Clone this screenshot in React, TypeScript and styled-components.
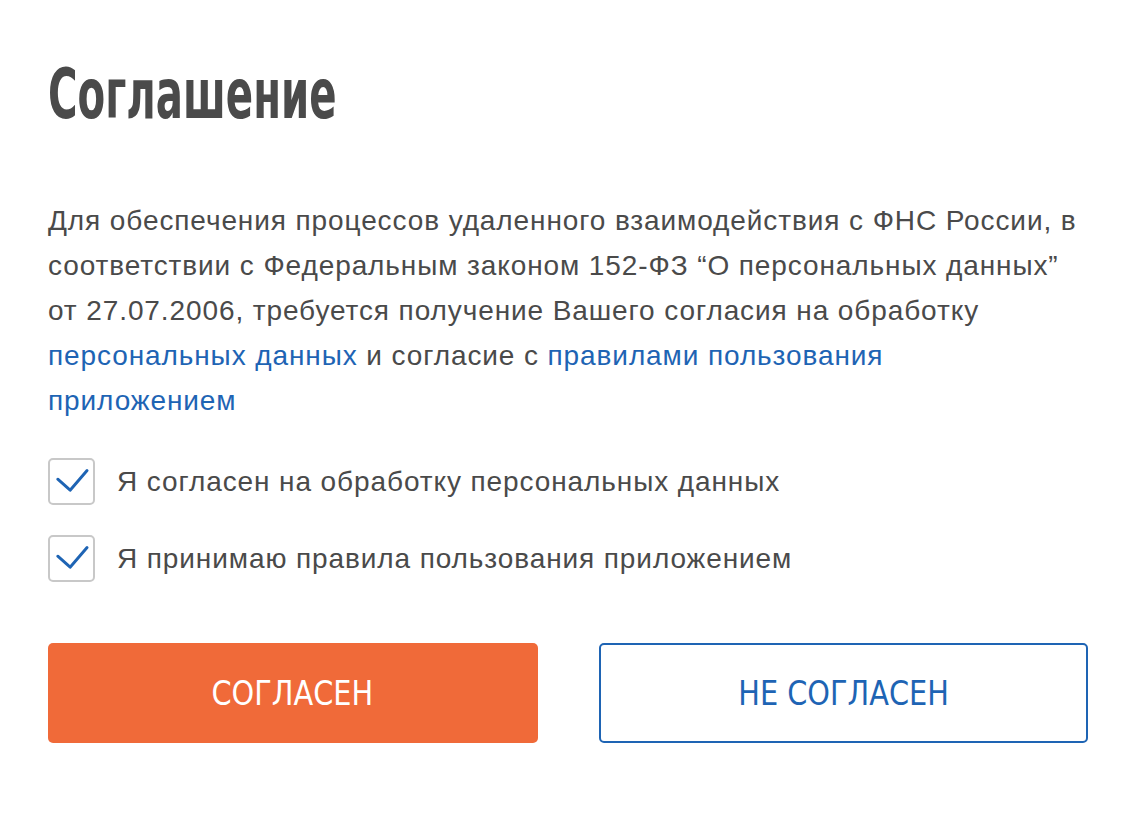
import React, { useState } from "react";
import styled, { createGlobalStyle } from "styled-components";

const GlobalStyle = createGlobalStyle`
  body {
    margin: 0;
    background: #fff;
    font-family: "Liberation Sans", Arial, sans-serif;
  }
`;

const Page = styled.div`
  padding: 59px 52px 0 48px;
  display: flex;
  flex-direction: column;
`;

const Title = styled.h1`
  margin: 0;
  font-family: "DejaVu Sans Condensed", "DejaVu Sans", sans-serif;
  font-weight: 700;
  font-size: 70px;
  line-height: 1;
  color: #4a4a4a;
  transform-origin: left center;
  transform: scaleX(0.64);
`;

const Text = styled.p`
  margin: 69px 0 0;
  max-width: 1032px;
  font-size: 28px;
  line-height: 45px;
  letter-spacing: 0.9px;
  color: #4a4a4a;
`;

const Link = styled.a`
  color: #1e64b4;
  text-decoration: none;
`;

const Options = styled.div`
  margin-top: 35px;
  display: flex;
  flex-direction: column;
  gap: 30px;
`;

const Option = styled.label`
  display: flex;
  align-items: center;
  gap: 22px;
  font-size: 28px;
  letter-spacing: 0.9px;
  color: #4a4a4a;
  cursor: pointer;
`;

const Box = styled.span`
  width: 47px;
  height: 47px;
  box-sizing: border-box;
  border: 2px solid #c8c8c8;
  border-radius: 5px;
  display: flex;
  align-items: center;
  justify-content: center;
  flex-shrink: 0;
`;

const Buttons = styled.div`
  margin-top: 61px;
  display: grid;
  grid-template-columns: 1fr 1fr;
  gap: 61px;
`;

const Button = styled.button<{ $primary?: boolean }>`
  height: 100px;
  box-sizing: border-box;
  border-radius: 5px;
  font-family: "DejaVu Sans Condensed", "DejaVu Sans", sans-serif;
  font-size: 33px;
  cursor: pointer;
  background: ${(p) => (p.$primary ? "#f06a39" : "#fff")};
  color: ${(p) => (p.$primary ? "#fff" : "#1e64b4")};
  border: ${(p) => (p.$primary ? "none" : "2px solid #1e64b4")};
`;

const ButtonLabel = styled.span`
  display: inline-block;
  transform: scaleX(0.97);
`;

function Check({ checked, label, onToggle }: { checked: boolean; label: string; onToggle: () => void }) {
  return (
    <Option onClick={onToggle}>
      <Box>
        {checked && (
          <svg width="47" height="47" viewBox="0 0 47 47">
            <path d="M8.5 21 L22 33 L40.5 11.5" fill="none" stroke="#1e64b4" strokeWidth="3.2" strokeLinecap="round" strokeLinejoin="round" />
          </svg>
        )}
      </Box>
      {label}
    </Option>
  );
}

export default function App() {
  const [first, setFirst] = useState(true);
  const [second, setSecond] = useState(true);

  return (
    <>
      <GlobalStyle />
      <Page>
        <Title>Соглашение</Title>
        <Text>
          Для обеспечения процессов удаленного взаимодействия с ФНС России, в соответствии с Федеральным законом
          152-ФЗ “О персональных данных” от 27.07.2006, требуется получение Вашего согласия на обработку{" "}
          <Link href="#">персональных данных</Link> и согласие с <Link href="#">правилами пользования приложением</Link>
        </Text>
        <Options>
          <Check checked={first} onToggle={() => setFirst(!first)} label="Я согласен на обработку персональных данных" />
          <Check checked={second} onToggle={() => setSecond(!second)} label="Я принимаю правила пользования приложением" />
        </Options>
        <Buttons>
          <Button $primary>
            <ButtonLabel>СОГЛАСЕН</ButtonLabel>
          </Button>
          <Button>
            <ButtonLabel>НЕ СОГЛАСЕН</ButtonLabel>
          </Button>
        </Buttons>
      </Page>
    </>
  );
}
